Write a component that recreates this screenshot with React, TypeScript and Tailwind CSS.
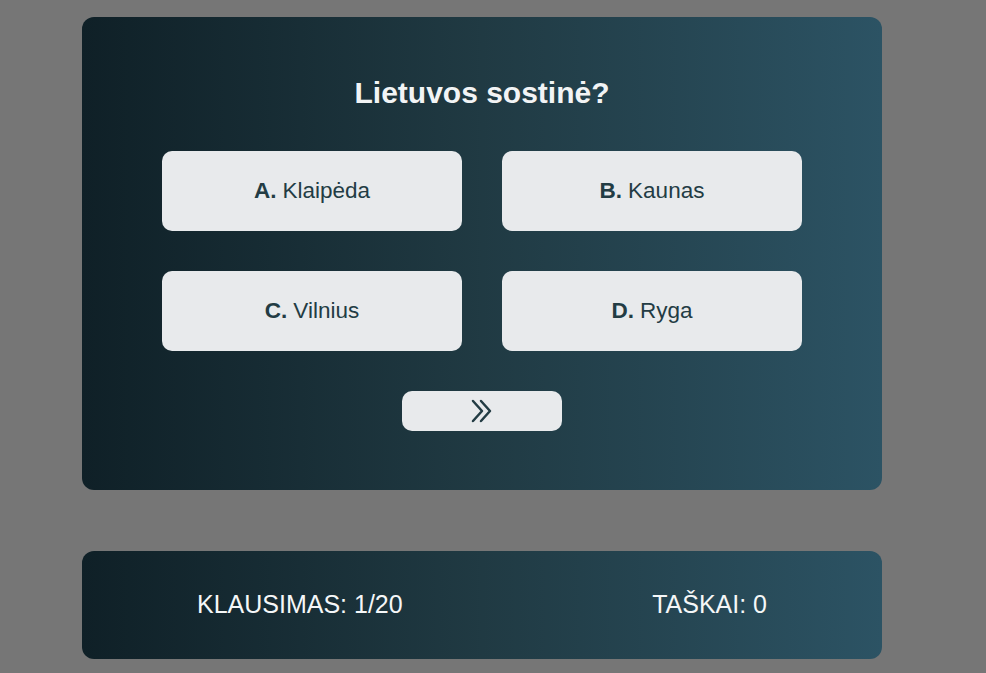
export default function App() {
  const answers = [
    { key: "A.", label: "Klaipėda" },
    { key: "B.", label: "Kaunas" },
    { key: "C.", label: "Vilnius" },
    { key: "D.", label: "Ryga" },
  ];

  return (
    <div
      className="min-h-[673px] w-full bg-[#767676] pt-[17px] pl-[82px]"
      style={{ fontFamily: '"Liberation Sans", Arial, sans-serif' }}
    >
      {/* QUIZ CARD */}
      <div className="w-[800px] rounded-[12px] bg-gradient-to-r from-[#0f2027] via-[#203a43] to-[#2c5364] pt-[58px] pb-[59px] flex flex-col items-center">
        <h1 className="text-[30px] leading-[36px] font-bold text-[#f2f4f5]">
          Lietuvos sostinė?
        </h1>

        <div className="mt-[40px] grid grid-cols-2 gap-[40px] w-[640px]">
          {answers.map((a) => (
            <button
              key={a.key}
              className="h-[80px] rounded-[10px] bg-[#e8eaec] text-[22.5px] text-[#233c44] flex items-center justify-center gap-[6px]"
            >
              <span className="font-bold">{a.key}</span>
              <span>{a.label}</span>
            </button>
          ))}
        </div>

        {/* NEXT */}
        <button className="mt-[40px] w-[160px] h-[40px] rounded-[10px] bg-[#e8eaec] flex items-center justify-center">
          <svg width="24" height="24" viewBox="0 0 24 24" fill="none" stroke="#233c44" strokeWidth="2.5" strokeLinecap="round" strokeLinejoin="round">
            <path d="M3 2 L12 12 L3 22" />
            <path d="M11 2 L20 12 L11 22" />
          </svg>
        </button>
      </div>

      {/* STATUS CARD */}
      <div className="mt-[61px] w-[800px] h-[108px] rounded-[12px] bg-gradient-to-r from-[#0f2027] via-[#203a43] to-[#2c5364] flex items-center justify-between px-[115px] text-[25px] text-[#f5f7f8]">
        <span>KLAUSIMAS: 1/20</span>
        <span>TAŠKAI: 0</span>
      </div>
    </div>
  );
}
